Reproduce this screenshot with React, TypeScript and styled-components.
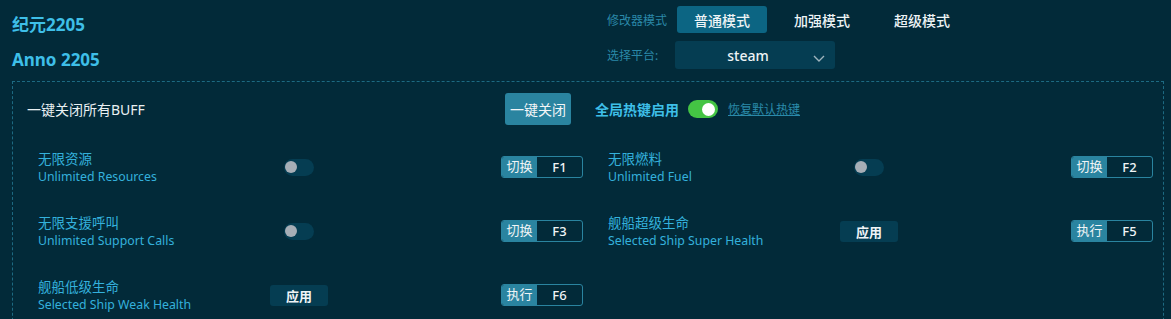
import React from "react";
import styled, { createGlobalStyle } from "styled-components";

const Global = createGlobalStyle`
  html, body { margin: 0; padding: 0; background: #022a39; }
  body { font-family: "Noto Sans", "Noto Sans CJK SC", sans-serif; }
  * { box-sizing: border-box; }
`;

const Page = styled.div`
  width: 1171px;
  height: 319px;
  overflow: hidden;
  background: #022a39;
  padding: 0 7px 0 12px;
`;

const Header = styled.div`
  display: flex;
  height: 81px;
`;

const Titles = styled.div`
  width: 595px;
  display: flex;
  flex-direction: column;
`;

const Title = styled.div<{ $top: number }>`
  margin-top: ${(p) => p.$top}px;
  font-size: 17px;
  font-weight: 700;
  line-height: 22px;
  color: #3ebfe8;
`;

const Controls = styled.div`
  display: flex;
  flex-direction: column;
  padding-top: 6px;
  gap: 8px;
`;

const ControlRow = styled.div`
  display: flex;
  align-items: center;
`;

const Label = styled.div`
  font-size: 12px;
  color: #2a88a8;
  width: 70px;
`;

const ModeButton = styled.div<{ $active?: boolean }>`
  width: 90px;
  height: 27px;
  margin-right: 10px;
  border-radius: 3px;
  display: flex;
  align-items: center;
  justify-content: center;
  font-size: 14px;
  font-weight: 500;
  color: #eef4f6;
  background: ${(p) => (p.$active ? "#0c6583" : "transparent")};
`;

const Select = styled.div`
  position: relative;
  width: 160px;
  height: 28px;
  margin-left: -2px;
  border-radius: 3px;
  background: #053d52;
  display: flex;
  align-items: center;
  justify-content: center;
  font-size: 14px;
  font-weight: 500;
  color: #eef4f6;
  padding-right: 14px;
`;

const Chevron = styled.svg`
  position: absolute;
  right: 10px;
  top: 14px;
`;

const Panel = styled.div`
  border: 1px dashed #1d6a82;
  border-bottom: none;
  height: 260px;
  padding: 11px 10px 0 14px;
`;

const TopRow = styled.div`
  display: flex;
  align-items: center;
  height: 32px;
`;

const TopLabel = styled.div`
  width: 478px;
  font-size: 14px;
  color: #e9f0f2;
`;

const PrimaryButton = styled.div`
  width: 66px;
  height: 32px;
  border-radius: 3px;
  background: #2a84a0;
  color: #f2f6f8;
  font-size: 14px;
  display: flex;
  align-items: center;
  justify-content: center;
  margin-right: 24px;
`;

const HotkeyLabel = styled.div`
  font-size: 14px;
  font-weight: 700;
  color: #3ebfe8;
  margin-right: 9px;
`;

const Track = styled.div<{ $on?: boolean; $w: number; $h: number }>`
  position: relative;
  width: ${(p) => p.$w}px;
  height: ${(p) => p.$h}px;
  border-radius: ${(p) => p.$h / 2}px;
  background: ${(p) => (p.$on ? "#44c444" : "#053d52")};
`;

const Knob = styled.div<{ $on?: boolean; $size: number }>`
  position: absolute;
  top: 50%;
  width: ${(p) => p.$size}px;
  height: ${(p) => p.$size}px;
  margin-top: ${(p) => -p.$size / 2}px;
  border-radius: 50%;
  background: ${(p) => (p.$on ? "#ffffff" : "#a6aeb6")};
  ${(p) => (p.$on ? "right: 3px;" : "left: 1px;")}
`;

const Link = styled.a`
  margin-left: 10px;
  font-size: 12px;
  color: #2a8aaa;
  text-decoration: underline;
`;

const Grid = styled.div`
  display: grid;
  grid-template-columns: 545px 545px;
  column-gap: 25px;
  margin-top: 10px;
  margin-left: 11px;
`;

const Cell = styled.div`
  display: grid;
  grid-template-columns: 200px 122px 1fr;
  align-items: center;
  height: 64px;
`;

const Names = styled.div`
  display: flex;
  flex-direction: column;
  white-space: nowrap;
  color: #34b1dc;
`;

const CnName = styled.div`
  font-size: 13.5px;
  line-height: 18px;
`;

const EnName = styled.div`
  font-size: 12.3px;
  line-height: 17px;
`;

const ControlSlot = styled.div`
  display: flex;
  justify-content: center;
`;

const ApplyButton = styled.div`
  width: 58px;
  height: 21px;
  border-radius: 3px;
  background: #053d52;
  color: #f0f4f6;
  font-size: 13px;
  font-weight: 700;
  display: flex;
  align-items: center;
  justify-content: center;
`;

const Hotkey = styled.div`
  justify-self: end;
  display: flex;
  width: 82px;
  height: 22px;
  border: 1px solid #2a84a0;
  border-radius: 3px;
  overflow: hidden;
`;

const HotkeyTag = styled.div`
  width: 35px;
  background: #2a84a0;
  color: #f0f4f6;
  font-size: 13px;
  line-height: 18px;
  text-align: center;
`;

const HotkeyKey = styled.div`
  flex: 1;
  color: #f0f4f6;
  font-size: 13px;
  font-weight: 500;
  display: flex;
  align-items: center;
  justify-content: center;
`;

type Feature = {
  cn: string;
  en: string;
  control: "toggle" | "apply";
  tag: string;
  key: string;
};

const features: Feature[] = [
  { cn: "无限资源", en: "Unlimited Resources", control: "toggle", tag: "切换", key: "F1" },
  { cn: "无限燃料", en: "Unlimited Fuel", control: "toggle", tag: "切换", key: "F2" },
  { cn: "无限支援呼叫", en: "Unlimited Support Calls", control: "toggle", tag: "切换", key: "F3" },
  { cn: "舰船超级生命", en: "Selected Ship Super Health", control: "apply", tag: "执行", key: "F5" },
  { cn: "舰船低级生命", en: "Selected Ship Weak Health", control: "apply", tag: "执行", key: "F6" },
];

export default function App() {
  return (
    <Page>
      <Global />
      <Header>
        <Titles>
          <Title $top={14}>纪元2205</Title>
          <Title $top={13}>Anno 2205</Title>
        </Titles>
        <Controls>
          <ControlRow>
            <Label>修改器模式</Label>
            <ModeButton $active>普通模式</ModeButton>
            <ModeButton>加强模式</ModeButton>
            <ModeButton>超级模式</ModeButton>
          </ControlRow>
          <ControlRow>
            <Label>选择平台:</Label>
            <Select>
              steam
              <Chevron width="12" height="7" viewBox="0 0 12 7">
                <path d="M1 1 L6 6 L11 1" fill="none" stroke="#9fb4be" strokeWidth="1.4" />
              </Chevron>
            </Select>
          </ControlRow>
        </Controls>
      </Header>
      <Panel>
        <TopRow>
          <TopLabel>一键关闭所有BUFF</TopLabel>
          <PrimaryButton>一键关闭</PrimaryButton>
          <HotkeyLabel>全局热键启用</HotkeyLabel>
          <Track $on $w={30} $h={18}>
            <Knob $on $size={13} />
          </Track>
          <Link>恢复默认热键</Link>
        </TopRow>
        <Grid>
          {features.map((f) => (
            <Cell key={f.key}>
              <Names>
                <CnName>{f.cn}</CnName>
                <EnName>{f.en}</EnName>
              </Names>
              <ControlSlot>
                {f.control === "toggle" ? (
                  <Track $w={30} $h={17}>
                    <Knob $size={12} />
                  </Track>
                ) : (
                  <ApplyButton>应用</ApplyButton>
                )}
              </ControlSlot>
              <Hotkey>
                <HotkeyTag>{f.tag}</HotkeyTag>
                <HotkeyKey>{f.key}</HotkeyKey>
              </Hotkey>
            </Cell>
          ))}
        </Grid>
      </Panel>
    </Page>
  );
}
